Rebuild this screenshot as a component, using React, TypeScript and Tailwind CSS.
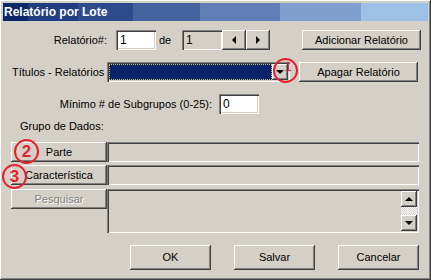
import React from 'react'

const font = "font-['Liberation_Sans',Arial,sans-serif]"
const raised = "bg-[#d4d0c8] shadow-[inset_-1px_-1px_0_#404040,inset_1px_1px_0_#ffffff,inset_-2px_-2px_0_#808080,inset_2px_2px_0_#d4d0c8]"
const sunken = "shadow-[inset_1px_1px_0_#808080,inset_2px_2px_0_#404040,inset_-1px_-1px_0_#ffffff,inset_-2px_-2px_0_#d4d0c8]"

function Btn({ label, className = "", disabled = false }: { label: string; className?: string; disabled?: boolean }) {
  return (
    <div className={`${raised} flex items-center justify-center text-[11px] ${disabled ? "text-[#808080] [text-shadow:1px_1px_0_#ffffff]" : "text-black"} ${className}`}>
      {label}
    </div>
  )
}

function Field({ value, className = "", white = true }: { value?: string; className?: string; white?: boolean }) {
  return (
    <div className={`${sunken} ${white ? "bg-white" : "bg-[#d4d0c8]"} flex items-center pl-[4px] text-[12px] ${className}`}>
      {value}
    </div>
  )
}

function Arrow({ dir }: { dir: "left" | "right" | "up" | "down" }) {
  const pts = {
    left: "4,0 4,8 0,4",
    right: "0,0 0,8 4,4",
    up: "0,4 8,4 4,0",
    down: "0,0 8,0 4,4",
  }[dir]
  const wh = dir === "left" || dir === "right" ? { w: 5, h: 8 } : { w: 8, h: 5 }
  return (
    <svg width={wh.w} height={wh.h} viewBox={`0 0 ${wh.w} ${wh.h}`}>
      <polygon points={pts} fill="#000" />
    </svg>
  )
}

function Mark({ n, className }: { n: string; className: string }) {
  return (
    <div className={`absolute w-[25px] h-[25px] rounded-full border-2 border-[#e8202a] flex items-center justify-center text-[#e8202a] font-bold text-[17px] leading-none pointer-events-none ${className}`}>
      {n}
    </div>
  )
}

export default function App() {
  return (
    <div className={`${font} relative w-[431px] h-[280px] bg-[#d4d0c8] p-[3px] shadow-[inset_-1px_-1px_0_#404040,inset_1px_1px_0_#ffffff,inset_-2px_-2px_0_#808080,inset_2px_2px_0_#d4d0c8] text-black select-none`}>
      <div className="h-[18px] flex items-center pl-[1px] bg-[linear-gradient(90deg,#0c2868_0,#0c2868_25px,#1f3d80_25px,#1f3d80_75px,#2c4b8d_75px,#2c4b8d_130px,#4464a0_130px,#4464a0_197px,#5f7eb6_197px,#5f7eb6_277px,#7fa0cf_277px,#7fa0cf_358px,#9dc0e7_358px)]">
        <span className="text-white font-bold text-[12px]">Relatório por Lote</span>
      </div>

      {/* row 1 */}
      <div className="flex items-center mt-[9px] h-[20px]">
        <div className="w-[104px] text-right text-[11px]">Relatório#:</div>
        <Field value="1" className="ml-[9px] w-[40px] h-[20px]" />
        <div className="ml-[3px] w-[23px] text-[11px]">de</div>
        <Field value="1" white={false} className="w-[40px] h-[20px]" />
        <div className={`${raised} w-[24px] h-[20px] flex items-center justify-center`}><Arrow dir="left" /></div>
        <div className={`${raised} w-[24px] h-[20px] flex items-center justify-center`}><Arrow dir="right" /></div>
        <Btn label="Adicionar Relatório" className="ml-[32px] w-[119px] h-[20px]" />
      </div>

      {/* row 2 */}
      <div className="flex items-center mt-[12px] h-[20px]">
        <div className="ml-[9px] w-[95px] text-[11px]">Títulos - Relatórios</div>
        <div className={`${sunken} bg-white w-[183px] h-[20px] p-[2px] flex`}>
          <div className="flex-1 bg-[#0a246a] border border-dotted border-[#c8c080]" />
          <div className={`${raised} w-[16px] flex items-center justify-center`}><Arrow dir="down" /></div>
        </div>
        <Btn label="Apagar Relatório" className="ml-[9px] w-[119px] h-[20px]" />
      </div>

      {/* row 3 */}
      <div className="flex items-center mt-[12px] h-[20px]">
        <div className="w-[209px] text-right text-[11px]">Mínimo # de Subgrupos (0-25):</div>
        <Field value="0" className="ml-[7px] w-[40px] h-[20px]" />
      </div>

      <div className="mt-[4px] ml-[17px] h-[16px] text-[11px] flex items-center">Grupo de Dados:</div>

      {/* data rows */}
      <div className="ml-[8px] mt-[8px] flex flex-col gap-[3px] w-[408px]">
        <div className="flex h-[20px]">
          <Btn label="Parte" className="w-[96px] h-[20px]" />
          <div className={`${sunken} flex-1`} />
        </div>
        <div className="flex h-[20px]">
          <Btn label="Característica" className="w-[96px] h-[20px]" />
          <div className={`${sunken} flex-1`} />
        </div>
        <div className="flex mt-[1px]">
          <Btn label="Pesquisar" disabled className="w-[96px] h-[20px]" />
          <div className={`${sunken} flex-1 h-[44px] flex justify-end p-[2px]`}>
            <div className="w-[16px] flex flex-col">
              <div className={`${raised} h-[16px] flex items-center justify-center`}><Arrow dir="up" /></div>
              <div className="flex-1 bg-[repeating-conic-gradient(#ffffff_0_25%,#d4d0c8_0_50%)] bg-[length:2px_2px]" />
              <div className={`${raised} h-[16px] flex items-center justify-center`}><Arrow dir="down" /></div>
            </div>
          </div>
        </div>
      </div>

      {/* bottom buttons */}
      <div className="flex justify-end gap-[23px] mt-[12px] mr-[9px]">
        <Btn label="OK" className="w-[81px] h-[25px]" />
        <Btn label="Salvar" className="w-[81px] h-[25px]" />
        <Btn label="Cancelar" className="w-[81px] h-[25px]" />
      </div>

      <div className="absolute left-[273px] top-[58px] w-[25px] h-[25px] rounded-full border-2 border-[#e8202a] pointer-events-none">
        <span className="absolute right-[4px] top-[0px] text-[#e8202a] text-[13px] leading-none">1</span>
      </div>
      <Mark n="2" className="left-[14px] top-[139px]" />
      <Mark n="3" className="left-[2px] top-[164px]" />
    </div>
  )
}
